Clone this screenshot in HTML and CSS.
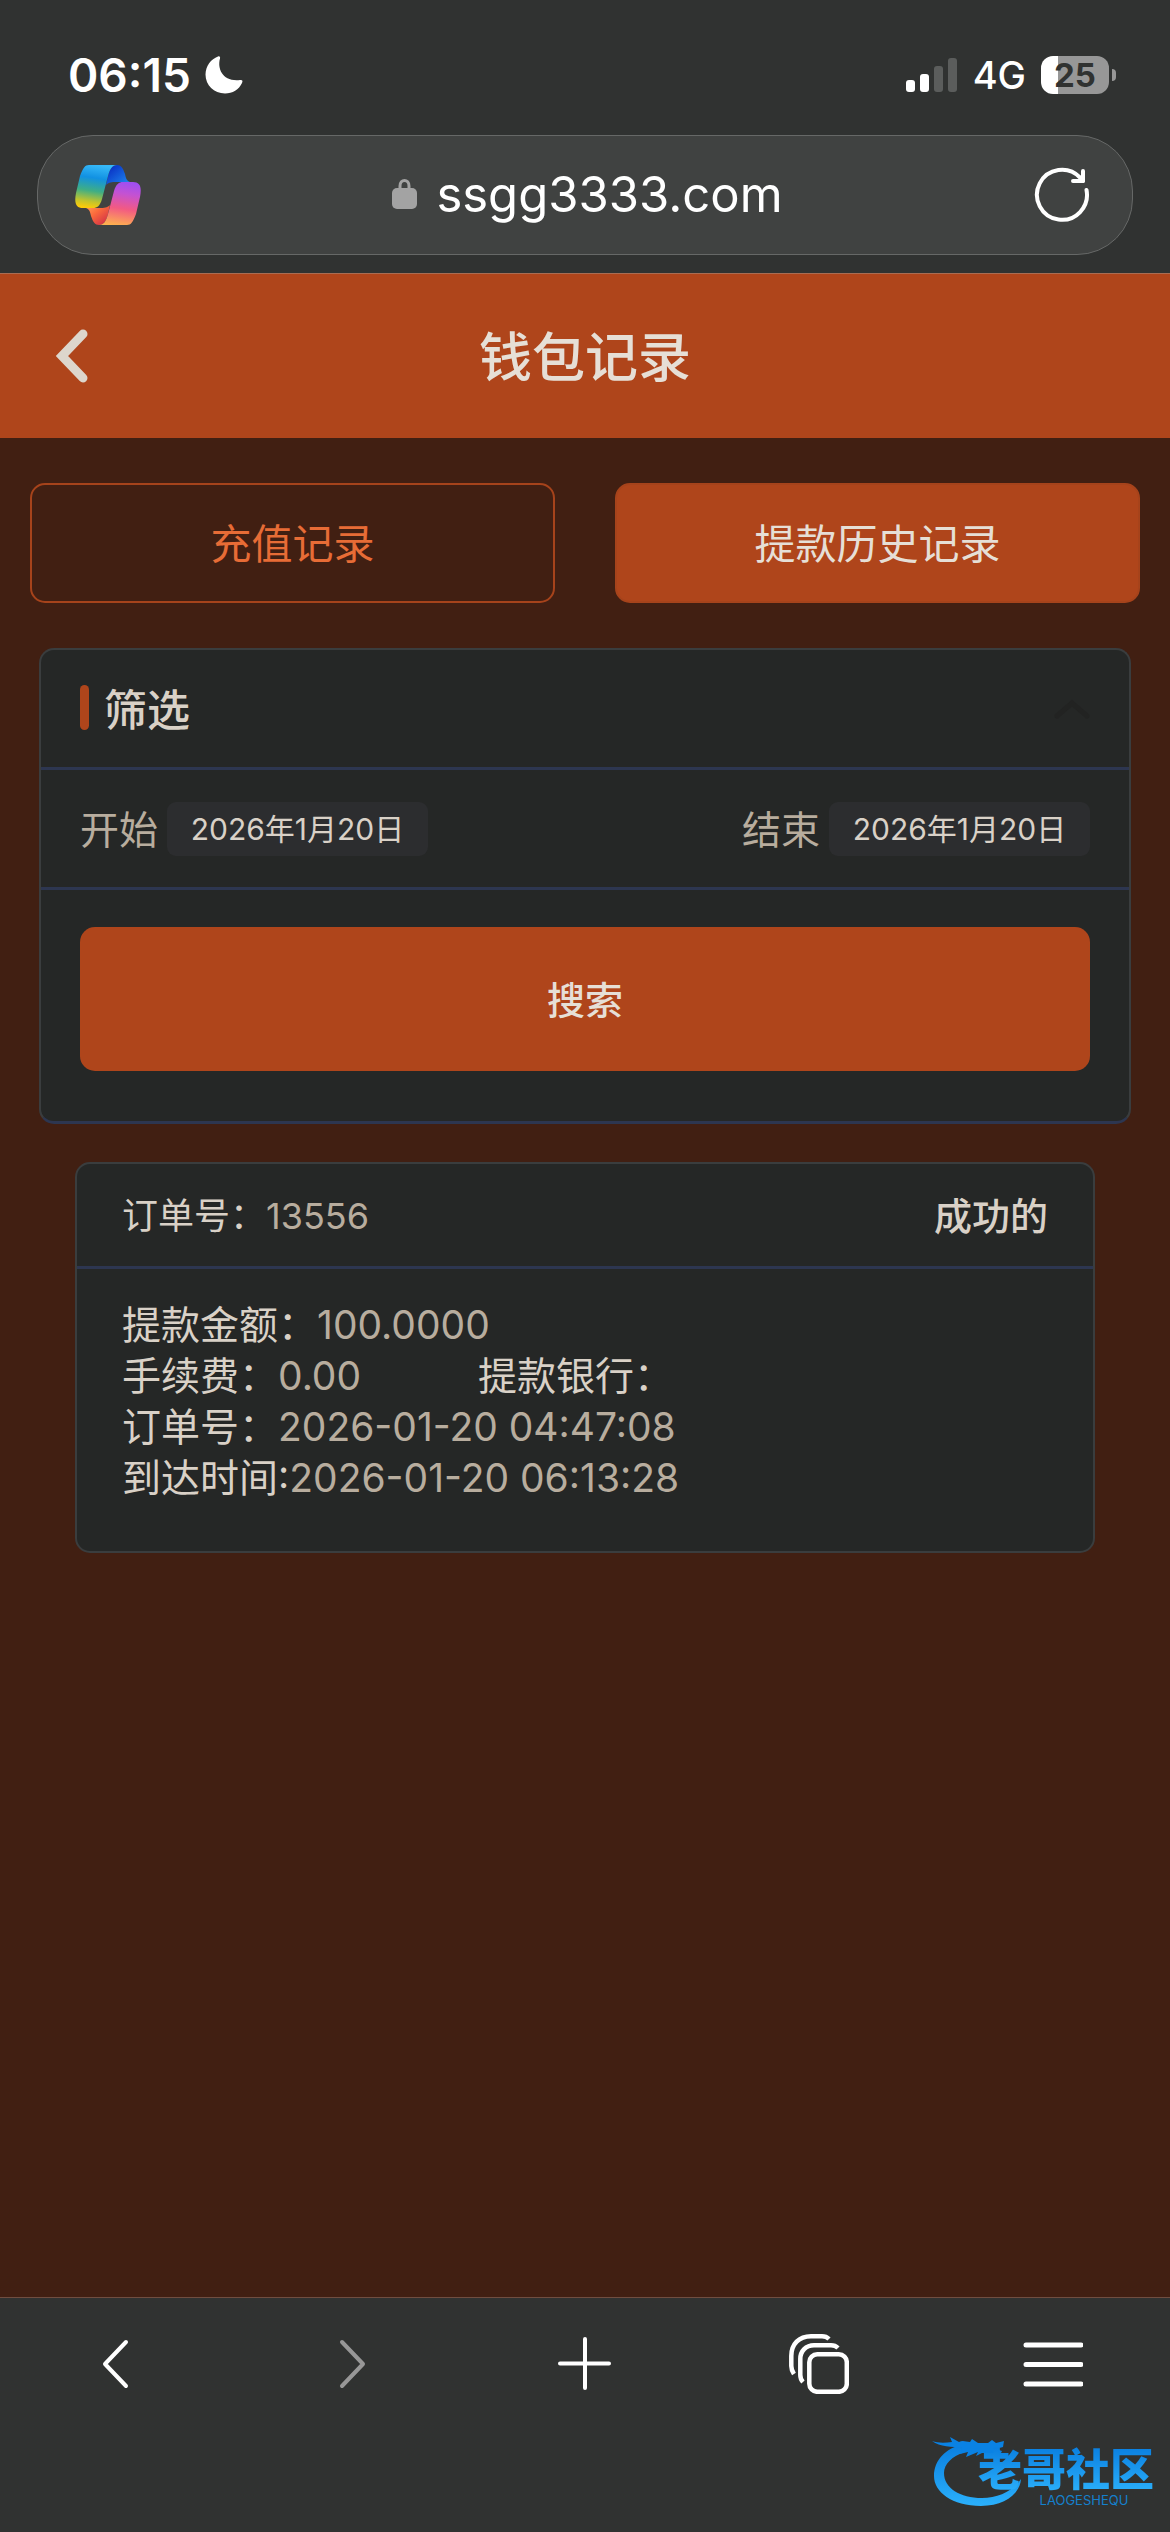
FILE: index.html
```html
<!DOCTYPE html>
<html lang="zh-CN">
<head>
    <meta charset="UTF-8">
    <meta name="viewport" content="width=device-width, initial-scale=1.0">
    <title>钱包记录</title>
    <link rel="stylesheet" href="styles.css">
</head>
<body>
    <!-- Browser top -->
    <div class="browser-top">
        <div class="status-bar">
            <div class="status-left">
                <span class="status-time">06:15</span>
                <svg width="38" height="38" viewBox="0 0 38 38">
                    <path d="M13 0.5 C14.500 0 15.500 1 15 2.500 C12 13 18 26 35 24 C37.500 23.600 38 25 37 27 C34 33.500 27.500 37.500 20 37.500 C9 37.500 0.500 29 0.500 18.500 C0.500 10 6 3 13 0.500 Z" fill="#fff"/>
                </svg>
            </div>
            <div class="status-right">
                <svg width="52" height="36" viewBox="0 0 52 36">
                    <rect x="0" y="23" width="9" height="12" rx="3" fill="#fff"/>
                    <rect x="14" y="17" width="9" height="18" rx="3" fill="#fff"/>
                    <rect x="28" y="9" width="9" height="26" rx="3" fill="#5b5d5c"/>
                    <rect x="42" y="1" width="9" height="34" rx="3" fill="#5b5d5c"/>
                </svg>
                <span class="status-network">4G</span>
                <div class="battery"><span class="battery-level">25</span></div>
            </div>
        </div>
        <div class="address-bar">
            <button class="icon-button" aria-label="Copilot">
                <svg width="66" height="60" viewBox="0 0 66 60">
                    <defs>
                        <linearGradient id="ribbon-cool" x1="0.500" y1="0" x2="0.350" y2="1">
                            <stop offset="0" stop-color="#36b8f8"/>
                            <stop offset="0.300" stop-color="#1191e2"/>
                            <stop offset="0.600" stop-color="#3fae85"/>
                            <stop offset="0.850" stop-color="#c3c42c"/>
                            <stop offset="1" stop-color="#fdcb09"/>
                        </linearGradient>
                        <linearGradient id="ribbon-warm" x1="0.500" y1="1" x2="0.650" y2="0">
                            <stop offset="0" stop-color="#a14ff0"/>
                            <stop offset="0.250" stop-color="#c452d2"/>
                            <stop offset="0.600" stop-color="#f25a83"/>
                            <stop offset="1" stop-color="#feb04f"/>
                        </linearGradient>
                        <linearGradient id="fold-cool" x1="0" y1="0" x2="1" y2="1">
                            <stop offset="0.200" stop-color="#0b38c8"/>
                            <stop offset="1" stop-color="#1f8df0"/>
                        </linearGradient>
                        <linearGradient id="fold-warm" x1="0" y1="0" x2="1" y2="1">
                            <stop offset="0.200" stop-color="#d93a45"/>
                            <stop offset="0.600" stop-color="#fb6a3c"/>
                            <stop offset="1" stop-color="#ffa35a"/>
                        </linearGradient>
                    </defs>
                    <path d="M42 0 C46 0 48 3 50 9 C51 14 52 16 55 17 H40 C35 17 33 18 31 20 L33 11 C35 4 37 0 42 0 Z" fill="url(#fold-cool)"/>
                    <path d="M14 0 H42 C37 0 35 4 33 11 L27 34 C25 41 22 43 18 43 H8 C1 43 -1 38 1 28 L5 11 C8 3 10 0 14 0 Z" fill="url(#ribbon-cool)"/>
                    <g transform="rotate(180 33 30)">
                        <path d="M42 0 C46 0 48 3 50 9 C51 14 52 16 55 17 H40 C35 17 33 18 31 20 L33 11 C35 4 37 0 42 0 Z" fill="url(#fold-warm)"/>
                        <path d="M14 0 H42 C37 0 35 4 33 11 L27 34 C25 41 22 43 18 43 H8 C1 43 -1 38 1 28 L5 11 C8 3 10 0 14 0 Z" fill="url(#ribbon-warm)"/>
                    </g>
                </svg>
            </button>
            <div class="address">
                <svg width="26" height="32" viewBox="0 0 26 32">
                    <path d="M8 12 V8 C8 0.500 17 0.500 17 8 V12" fill="none" stroke="#a3a3a3" stroke-width="3"/>
                    <rect x="0" y="10" width="25" height="21" rx="5" fill="#a3a3a3"/>
                </svg>
                <span>ssgg3333.com</span>
            </div>
            <button class="icon-button" aria-label="刷新">
                <svg width="56" height="56" viewBox="0 0 56 56" fill="none" stroke="#fff" stroke-width="4" stroke-linecap="round" stroke-linejoin="round">
                    <path d="M52.500 23 A25 25 0 1 1 46 10.500 L49 14"/>
                    <path d="M49 4 V14 H39"/>
                </svg>
            </button>
        </div>
    </div>

    <!-- Page header -->
    <header class="page-header">
        <button class="icon-button back" aria-label="返回">
            <svg width="34" height="54" viewBox="0 0 34 54">
                <path d="M28 5 L7 27 L28 49" fill="none" stroke="#ddd6cc" stroke-width="9" stroke-linecap="round"/>
            </svg>
        </button>
        <h1>钱包记录</h1>
    </header>

    <main>
        <nav class="tabs">
            <button class="tab">充值记录</button>
            <button class="tab tab-active">提款历史记录</button>
        </nav>

        <!-- Filter -->
        <form class="card filter">
            <div class="filter-head">
                <h2>筛选</h2>
                <svg width="36" height="20" viewBox="0 0 36 20">
                    <path d="M3 17 L18 4 L33 17" fill="none" stroke="#222322" stroke-width="5" stroke-linecap="round"/>
                </svg>
            </div>
            <div class="filter-dates">
                <div class="date-field">
                    <label for="date-start">开始</label>
                    <input type="text" id="date-start" value="2026年1月20日" readonly>
                </div>
                <div class="date-field">
                    <label for="date-end">结束</label>
                    <input type="text" id="date-end" value="2026年1月20日" readonly>
                </div>
            </div>
            <div class="filter-action">
                <button type="button" class="search-button">搜索</button>
            </div>
        </form>

        <!-- Order -->
        <section class="card order">
            <div class="order-head">
                <div>订单号：<span class="value">13556</span></div>
                <div class="order-status">成功的</div>
            </div>
            <div class="order-body">
                <div>提款金额：<span class="value">100.0000</span></div>
                <div class="order-row">
                    <div>手续费：<span class="value">0.00</span></div>
                    <div>提款银行：</div>
                </div>
                <div>订单号：<span class="value">2026-01-20 04:47:08</span></div>
                <div>到达时间:<span class="value">2026-01-20 06:13:28</span></div>
            </div>
        </section>
    </main>

    <!-- Browser toolbar -->
    <footer class="toolbar">
        <button class="icon-button" aria-label="后退">
            <svg width="60" height="60" viewBox="0 0 60 60">
                <path d="M39 8 L18 30 L39 52" fill="none" stroke="#fff" stroke-width="4" stroke-linecap="round" stroke-linejoin="round"/>
            </svg>
        </button>
        <button class="icon-button" aria-label="前进">
            <svg width="60" height="60" viewBox="0 0 60 60">
                <path d="M21 8 L42 30 L21 52" fill="none" stroke="#979797" stroke-width="4" stroke-linecap="round" stroke-linejoin="round"/>
            </svg>
        </button>
        <button class="icon-button" aria-label="新标签页">
            <svg width="60" height="60" viewBox="0 0 60 60">
                <path d="M30 5 V54 M5 29.500 H54" fill="none" stroke="#fff" stroke-width="4" stroke-linecap="round"/>
            </svg>
        </button>
        <button class="icon-button" aria-label="标签页">
            <svg width="60" height="60" viewBox="0 0 60 60" fill="none" stroke="#fff" stroke-width="4.500">
                <path d="M40 5 C38 3 36 2.300 33 2.300 H22 C10 2.300 2.300 10 2.300 22 V32 C2.300 36 3 37 5 40"/>
                <path d="M49 14 C47 12 45 11.300 42 11.300 H25 C17 11.300 11.300 17 11.300 25 V41 C11.300 45 12 46 14 48"/>
                <rect x="20.300" y="20.300" width="37.500" height="37.500" rx="8"/>
            </svg>
        </button>
        <button class="icon-button" aria-label="菜单">
            <svg width="60" height="60" viewBox="0 0 60 60">
                <path d="M3 11 H58 M3 30.500 H58 M3 50 H58" fill="none" stroke="#fff" stroke-width="5" stroke-linecap="round"/>
            </svg>
        </button>

        <div class="community-logo">
            <svg class="dragon" width="92" height="78" viewBox="0 0 92 78">
                <defs>
                    <linearGradient id="dragon-blue" x1="0" y1="0" x2="0" y2="1">
                        <stop offset="0" stop-color="#0a7fe0"/>
                        <stop offset="1" stop-color="#2bb0fb"/>
                    </linearGradient>
                </defs>
                <path d="M30 15 C14 18 2 30 2 46 C2 62 20 76 49 76 C72 76 88 64 89 49 C80 62 66 68 50 68 C28 68 12 58 12 43 C12 34 20 26 33 22 Z" fill="url(#dragon-blue)"/>
                <path d="M0 11 C6 13 12 13 20 12 L18 7 L27 12 C31 10 34 12 38 12 L40 9 L46 13 H56 L60 10 L64 13 L72 11 L71 17 L64 19 L70 21 L68 25 L58 23 L50 23 L44 26 L46 22 L34 27 L36 22 L28 24 L30 17 C20 17 8 17 0 11 Z" fill="#0a82e4"/>
            </svg>
            <div class="community-name">
                <strong>老哥社区</strong>
                <small>LAOGESHEQU</small>
            </div>
        </div>
    </footer>
</body>
</html>
```
FILE: styles.css
```css
* {
    box-sizing: border-box;
}

body {
    font-family: Inter, "Noto Sans CJK SC", sans-serif;
    margin: 0;
    min-height: 100vh;
    display: flex;
    flex-direction: column;
    background-color: #411f12;
    color: #d9d1c7;
}

button {
    font-family: inherit;
    padding: 0;
    border: none;
    cursor: pointer;
}

svg {
    display: block;
    flex-shrink: 0;
}

.icon-button {
    background: none;
    display: flex;
    justify-content: center;
    align-items: center;
}

/* Browser top */
.browser-top {
    background-color: #303231;
    border-bottom: 1px solid #a96c52;
    padding-bottom: 18px;
}

.status-bar {
    height: 135px;
    padding: 14px 54px 0 68px;
    display: flex;
    justify-content: space-between;
    align-items: center;
    color: #fff;
}

.status-left,
.status-right {
    display: flex;
    align-items: center;
}

.status-left {
    gap: 14px;
}

.status-right {
    gap: 15px;
}

.status-time {
    font-size: 46px;
    font-weight: 600;
}

.status-network {
    font-size: 38px;
    font-weight: 500;
}

.battery {
    position: relative;
    width: 68px;
    height: 38px;
    margin-right: 7px;
    border-radius: 12px;
    background: linear-gradient(to right, #fff 25%, #979797 25%);
    display: flex;
    justify-content: center;
    align-items: center;
}

.battery::after {
    content: "";
    position: absolute;
    right: -7px;
    top: 13px;
    width: 4px;
    height: 12px;
    border-radius: 0 4px 4px 0;
    background-color: #979797;
}

.battery-level {
    font-size: 33px;
    font-weight: 700;
    line-height: 38px;
    color: #303231;
}

.address-bar {
    height: 120px;
    margin: 0 37px;
    padding: 0 42px 0 37px;
    border: 1px solid #666867;
    border-radius: 56px;
    background-color: #404241;
    display: flex;
    justify-content: space-between;
    align-items: center;
}

.address {
    display: flex;
    align-items: center;
    gap: 18px;
    padding-bottom: 2px;
    font-size: 49px;
    color: #fff;
}

/* Page header */
.page-header {
    position: relative;
    height: 164px;
    padding-bottom: 4px;
    background-color: #af451b;
    display: flex;
    justify-content: center;
    align-items: center;
}

.back {
    position: absolute;
    left: 55px;
    top: 55px;
}

h1 {
    margin: 0;
    font-size: 53px;
    font-weight: 500;
    color: #e6dfd6;
}

main {
    flex: 1;
}

.tabs {
    display: flex;
    gap: 60px;
    padding: 45px 30px;
}

.tab {
    flex: 1;
    height: 120px;
    padding-bottom: 4px;
    border: 2px solid #a6431b;
    border-radius: 15px;
    background: none;
    font-size: 41px;
    color: #e76c36;
}

.tab-active {
    background-color: #af451b;
    color: #e6dfd6;
}

/* Cards */
.card {
    background-color: #252726;
    border: 2px solid #3a3d3e;
    border-radius: 15px;
}

.filter {
    margin: 0 39px;
    border-bottom: 3px solid #2d3650;
}

.filter-head,
.filter-dates {
    height: 120px;
    padding: 0 39px;
    border-bottom: 3px solid #2d3650;
    display: flex;
    justify-content: space-between;
    align-items: center;
}

h2 {
    margin: 0;
    padding-left: 24px;
    padding-bottom: 4px;
    position: relative;
    font-size: 43px;
    font-weight: 500;
}

h2::before {
    content: "";
    position: absolute;
    left: 0;
    top: 9px;
    width: 9px;
    height: 45px;
    border-radius: 5px;
    background-color: #af451b;
}

.date-field {
    display: flex;
    align-items: center;
    gap: 9px;
    font-size: 39px;
    color: #b8ad9e;
}

.date-field label {
    padding-bottom: 4px;
}

.date-field input {
    width: 261px;
    height: 54px;
    padding: 0 0 4px;
    border: none;
    border-radius: 9px;
    background-color: #2c2d2f;
    font-family: inherit;
    font-size: 30px;
    text-align: center;
    color: #d9d1c7;
}

.filter-action {
    padding: 37px 39px 50px;
}

.search-button {
    width: 100%;
    height: 144px;
    padding-bottom: 4px;
    border-radius: 15px;
    background-color: #af451b;
    font-size: 38px;
    font-weight: 500;
    color: #e6dfd6;
}

/* Order */
.order {
    margin: 38px 75px 0;
}

.order-head {
    height: 105px;
    padding: 0 45px 4px;
    border-bottom: 3px solid #2d3650;
    display: flex;
    justify-content: space-between;
    align-items: center;
    font-size: 36px;
}

.order-status {
    font-size: 38px;
    font-weight: 500;
}

.order-body {
    padding: 30px 45px 48px;
    font-size: 39px;
    line-height: 51px;
}

.order-row {
    display: flex;
    gap: 117px;
}

.value {
    color: #b8ad9e;
}

/* Browser toolbar */
.toolbar {
    position: relative;
    height: 235px;
    padding-top: 36px;
    border-top: 1px solid #704d40;
    background-color: #303231;
    display: flex;
    align-items: flex-start;
}

.toolbar .icon-button {
    flex: 1;
}

.community-logo {
    position: absolute;
    right: 16px;
    bottom: 24px;
    width: 222px;
    height: 78px;
}

.dragon {
    position: absolute;
    left: 0;
    top: 0;
}

.community-name {
    position: absolute;
    right: 0;
    top: 17px;
    display: flex;
    flex-direction: column;
    align-items: center;
}

.community-name strong {
    font-size: 44px;
    font-weight: 900;
    line-height: 46px;
    background: linear-gradient(#0a7fe0, #2bb0fb);
    background-clip: text;
    -webkit-background-clip: text;
    color: transparent;
}

.community-name small {
    padding-left: 36px;
    font-size: 13px;
    line-height: 14px;
    color: #1580cc;
}
```
